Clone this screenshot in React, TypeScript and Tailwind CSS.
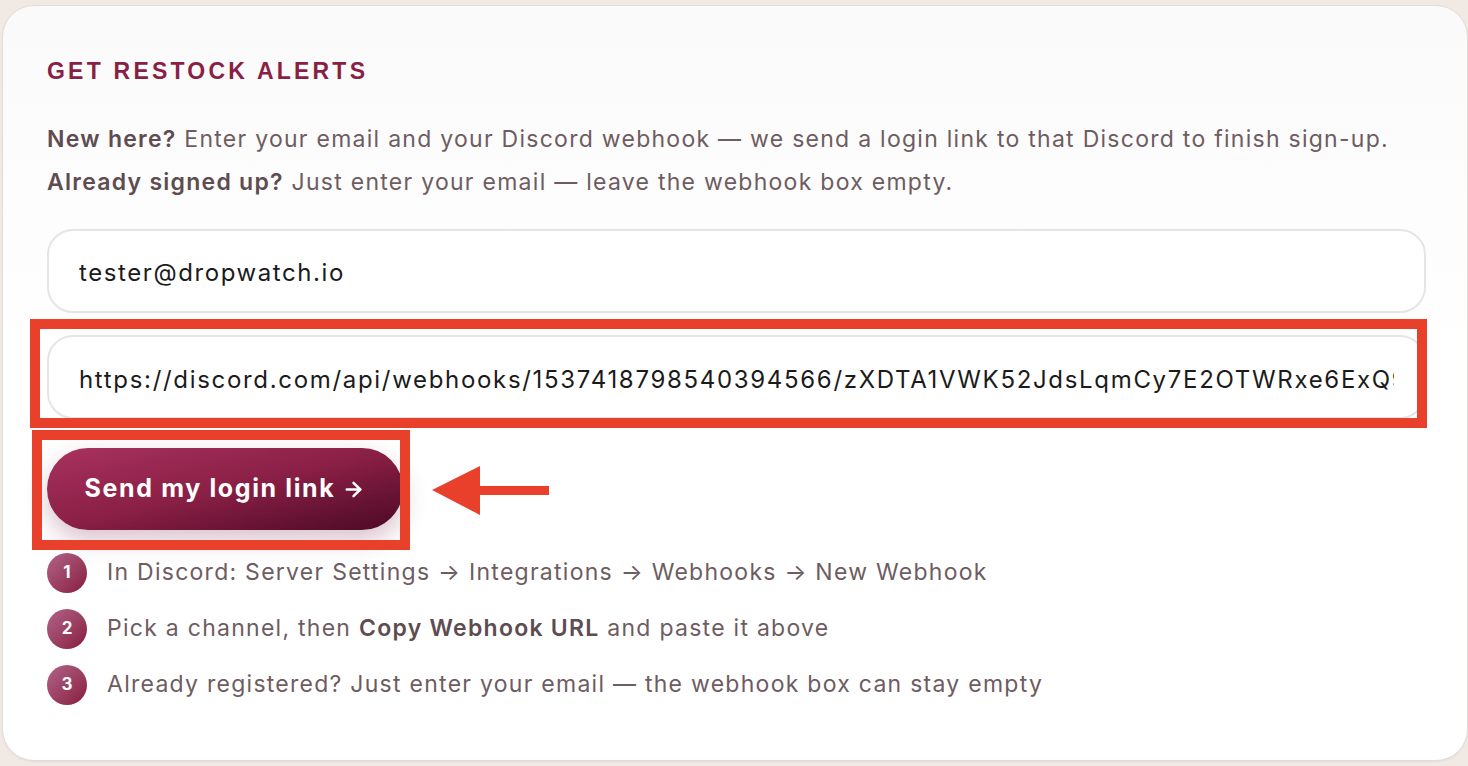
import { ArrowRight } from "lucide-react";

const steps = [
  { n: 1, text: <>In Discord: Server Settings → Integrations → Webhooks → New Webhook</> },
  {
    n: 2,
    text: (
      <>
        Pick a channel, then <b className="font-semibold text-[#5e4c51]">Copy Webhook URL</b> and paste it above
      </>
    ),
  },
  { n: 3, text: <>Already registered? Just enter your email — the webhook box can stay empty</> },
];

export default function App() {
  return (
    <div className="h-[766px] w-[1468px] overflow-hidden bg-[#f1e9e4] font-['Inter',sans-serif]">
      <div className="relative ml-[2px] mt-[5px] h-[756px] w-[1466px] rounded-[32px] border border-[#e2dcda] bg-gradient-to-b from-[#fafafa] via-white to-white px-[44px] pt-[49px] shadow-[0_1px_2px_rgba(0,0,0,0.06)]">
        <h2 className="font-['Liberation_Sans',Arial,sans-serif] text-[23px] font-bold leading-[32px] tracking-[0.14em] text-[#8a1f45]">
          GET RESTOCK ALERTS
        </h2>

        <div className="mt-[31px] text-[23px] leading-[43px] tracking-[0.055em] text-[#6e5c61]">
          <p>
            <b className="font-semibold text-[#5e4c51]">New here?</b> Enter your email and your Discord webhook — we send a
            login link to that Discord to finish sign-up.
          </p>
          <p>
            <b className="font-semibold text-[#5e4c51]">Already signed up?</b> Just enter your email — leave the webhook box
            empty.
          </p>
        </div>

        <div className="mt-[25px] flex w-[1379px] flex-col gap-[22px]">
          <div className="flex h-[84px] items-center rounded-[26px] border-2 border-[#e6e4e4] bg-white px-[30px] pt-[4px] text-[24px] tracking-[0.066em] text-[#1b1b1b]">
            tester@dropwatch.io
          </div>
          <div className="flex h-[84px] items-center overflow-hidden whitespace-nowrap rounded-[26px] border-2 border-[#e6e4e4] bg-white pl-[30px] pr-[30px] pt-[6px] text-[24px] tracking-[0.07em] text-[#1b1b1b]">
            <span className="block overflow-hidden">
              https://discord.com/api/webhooks/1537418798540394566/zXDTA1VWK52JdsLqmCy7E2OTWRxe6ExQ9k
            </span>
          </div>
        </div>

        <button className="mt-[29px] flex h-[82px] w-[356px] items-center justify-center gap-[7px] rounded-full bg-gradient-to-br from-[#a8325e] via-[#8a1f45] to-[#4c0a25] text-[25px] font-bold tracking-[0.065em] text-white shadow-[0_10px_24px_rgba(120,30,70,0.28)]">
          Send my login link
          <ArrowRight className="h-[23px] w-[23px]" strokeWidth={2.6} />
        </button>

        <ol className="mt-[22px] flex flex-col gap-[15px]">
          {steps.map((s) => (
            <li key={s.n} className="flex items-center gap-[20px] text-[23px] leading-[41px] tracking-[0.055em] text-[#6e5c61]">
              <span className="flex h-[40px] w-[40px] shrink-0 items-center justify-center rounded-full bg-gradient-to-br from-[#b0648a] to-[#87193f] text-[17px] font-bold tracking-normal text-white">
                {s.n}
              </span>
              <span>{s.text}</span>
            </li>
          ))}
        </ol>

        {/* annotation overlays */}
        <div className="pointer-events-none absolute left-[27px] top-[313px] h-[109px] w-[1397px] border-[10px] border-[#e8402a]" />
        <div className="pointer-events-none absolute left-[29px] top-[424px] h-[120px] w-[378px] border-[10px] border-[#e8402a]" />
        <svg className="pointer-events-none absolute left-[427px] top-[460px]" width="120" height="50" viewBox="0 0 120 50">
          <polygon points="2,24 50,0 50,49" fill="#e8402a" />
          <rect x="49" y="20" width="70" height="9" fill="#e8402a" />
        </svg>
      </div>
    </div>
  );
}
